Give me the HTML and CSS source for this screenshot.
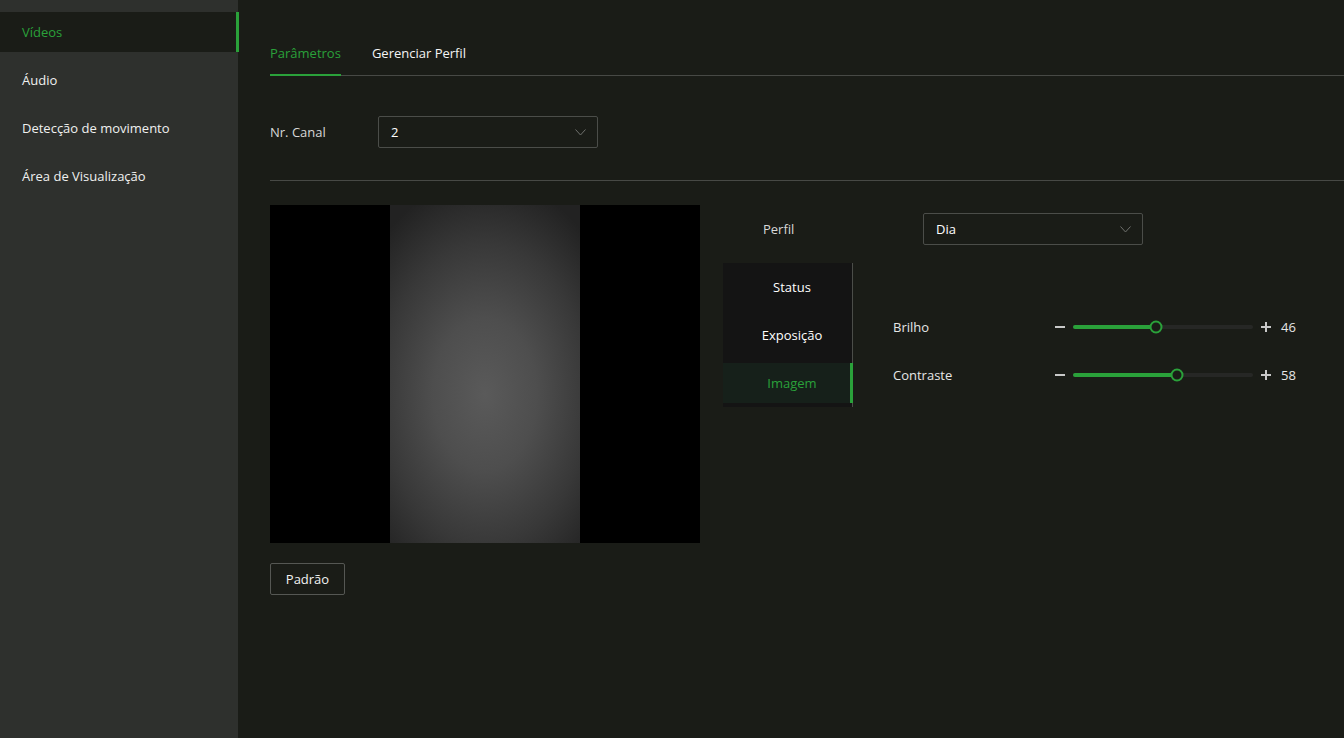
FILE: index.html
```html
<!DOCTYPE html>
<html lang="pt">
<head>
    <meta charset="UTF-8">
    <title>Vídeos</title>
    <link rel="stylesheet" href="styles.css">
</head>
<body>

    <!-- 사이드 메뉴 -->
    <aside class="side">
        <ul>
            <li class="on">Vídeos</li>
            <li>Áudio</li>
            <li>Detecção de movimento</li>
            <li>Área de Visualização</li>
        </ul>
    </aside>

    <!-- 메인 영역 -->
    <main class="cont">
        <nav class="tabs">
            <a href="#" class="on">Parâmetros</a>
            <a href="#">Gerenciar Perfil</a>
        </nav>

        <div class="row chrow">
            <label>Nr. Canal</label>
            <div class="sel">
                <span>2</span>
                <svg width="11" height="7" viewBox="0 0 11 7"><path d="M0.5 0.5 L5.5 6 L10.5 0.5" fill="none" stroke="#6f716d" stroke-width="1"/></svg>
            </div>
        </div>

        <div class="line"></div>

        <div class="wrap">
            <div class="left">
                <!-- 미리보기 -->
                <div class="view">
                    <div class="cam"></div>
                </div>
                <button class="btn">Padrão</button>
            </div>

            <div class="right">
                <div class="row pfrow">
                    <label>Perfil</label>
                    <div class="sel">
                        <span>Dia</span>
                        <svg width="11" height="7" viewBox="0 0 11 7"><path d="M0.5 0.5 L5.5 6 L10.5 0.5" fill="none" stroke="#6f716d" stroke-width="1"/></svg>
                    </div>
                </div>

                <div class="setbx">
                    <ul class="vtab">
                        <li>Status</li>
                        <li>Exposição</li>
                        <li class="on">Imagem</li>
                    </ul>

                    <div class="sliders">
                        <div class="srow">
                            <label>Brilho</label>
                            <svg class="pm" width="10" height="10" viewBox="0 0 10 10"><path d="M0 5 H10" stroke="#c8c8c8" stroke-width="2"/></svg>
                            <div class="track"><div class="fill" style="width:46%"></div><i style="left:46%"></i></div>
                            <svg class="pm" width="10" height="10" viewBox="0 0 10 10"><path d="M0 5 H10 M5 0 V10" stroke="#c8c8c8" stroke-width="2"/></svg>
                            <span class="val">46</span>
                        </div>
                        <div class="srow">
                            <label>Contraste</label>
                            <svg class="pm" width="10" height="10" viewBox="0 0 10 10"><path d="M0 5 H10" stroke="#c8c8c8" stroke-width="2"/></svg>
                            <div class="track"><div class="fill" style="width:58%"></div><i style="left:58%"></i></div>
                            <svg class="pm" width="10" height="10" viewBox="0 0 10 10"><path d="M0 5 H10 M5 0 V10" stroke="#c8c8c8" stroke-width="2"/></svg>
                            <span class="val">58</span>
                        </div>
                    </div>
                </div>
            </div>
        </div>
    </main>

</body>
</html>
```

FILE: styles.css
```css
html,body{
    margin: 0;
    padding: 0;
    height: 100%;
}
body{
    display: flex;
    background-color: #1a1c17;
    color: #e6e6e6;
    font-family: "Open Sans", "Noto Sans", sans-serif;
    font-size: 13px;
    overflow: hidden;
}
ul{
    margin: 0;
    padding: 0;
    list-style: none;
}

/* 사이드 메뉴 */
.side{
    flex: 0 0 238px;
    height: 100%;
    padding-top: 12px;
    box-sizing: border-box;
    background-color: #2e302d;
}
.side li{
    height: 40px;
    line-height: 40px;
    margin-bottom: 8px;
    padding-left: 22px;
    color: #f0f0f0;
}
.side li.on{
    margin-right: -1px;
    background-color: #1a1c17;
    border-right: 3px solid #2aa13a;
    color: #2aa13a;
}

/* 메인 */
.cont{
    flex: 1;
    padding: 34px 0 0 32px;
}
.tabs{
    display: flex;
    gap: 31px;
    border-bottom: 1px solid #474945;
}
.tabs a{
    padding: 9px 0 11px;
    line-height: 20px;
    margin-bottom: -1px;
    border-bottom: 2px solid transparent;
    color: #f4f4f4;
    text-decoration: none;
}
.tabs a.on{
    color: #2aa13a;
    border-color: #2aa13a;
}

.row{
    display: flex;
    align-items: center;
}
.row label{
    color: #d8d8d8;
}
.chrow{
    margin-top: 40px;
}
.chrow label{
    width: 108px;
}
.sel{
    display: flex;
    align-items: center;
    justify-content: space-between;
    width: 220px;
    height: 32px;
    padding: 0 11px 0 12px;
    box-sizing: border-box;
    border: 1px solid #4b4d49;
    border-radius: 2px;
    color: #fff;
}
.line{
    margin-top: 32px;
    height: 1px;
    background-color: #474945;
}

.wrap{
    display: flex;
    gap: 23px;
    margin-top: 24px;
}

/* 미리보기 */
.view{
    display: flex;
    justify-content: center;
    width: 430px;
    height: 338px;
    background-color: #000;
}
.cam{
    width: 190px;
    background: radial-gradient(ellipse 78% 64% at 50% 56%, #5a5a5a 0%, #4e4e4e 35%, #383838 70%, #222 100%);
}
.btn{
    margin-top: 20px;
    width: 75px;
    height: 32px;
    background: none;
    border: 1px solid #555753;
    border-radius: 2px;
    color: #f2f2f2;
    font-family: inherit;
    font-size: 13px;
}

/* 설정 */
.right{
    padding-top: 8px;
}
.pfrow label{
    width: 160px;
    padding-left: 40px;
}
.setbx{
    display: flex;
    margin-top: 18px;
}
.vtab{
    width: 129px;
    padding: 4px 0;
    background-color: #141414;
    border-right: 1px solid #4b4d49;
}
.vtab li{
    height: 40px;
    line-height: 40px;
    margin-bottom: 8px;
    padding-left: 9px;
    text-align: center;
    color: #fff;
}
.vtab li:last-child{
    margin-bottom: 0;
}
.vtab li.on{
    margin-right: -1px;
    padding-left: 11px;
    background-color: #16201a;
    border-right: 3px solid #2aa13a;
    color: #2aa13a;
}

.sliders{
    padding: 48px 0 0 40px;
}
.srow{
    display: flex;
    align-items: center;
    height: 32px;
    margin-bottom: 16px;
}
.srow label{
    width: 162px;
    color: #e6e6e6;
}
.track{
    position: relative;
    width: 180px;
    height: 4px;
    margin: 0 8px;
    border-radius: 2px;
    background-color: #262725;
}
.fill{
    height: 100%;
    border-radius: 2px;
    background-color: #2aa13a;
}
/* 슬라이더 손잡이 */
.track i{
    position: absolute;
    top: 50%;
    width: 9px;
    height: 9px;
    border: 2px solid #2aa13a;
    border-radius: 50%;
    background-color: #1a1c17;
    transform: translate(-50%,-50%);
}
.val{
    margin-left: 10px;
    color: #e6e6e6;
}
```
